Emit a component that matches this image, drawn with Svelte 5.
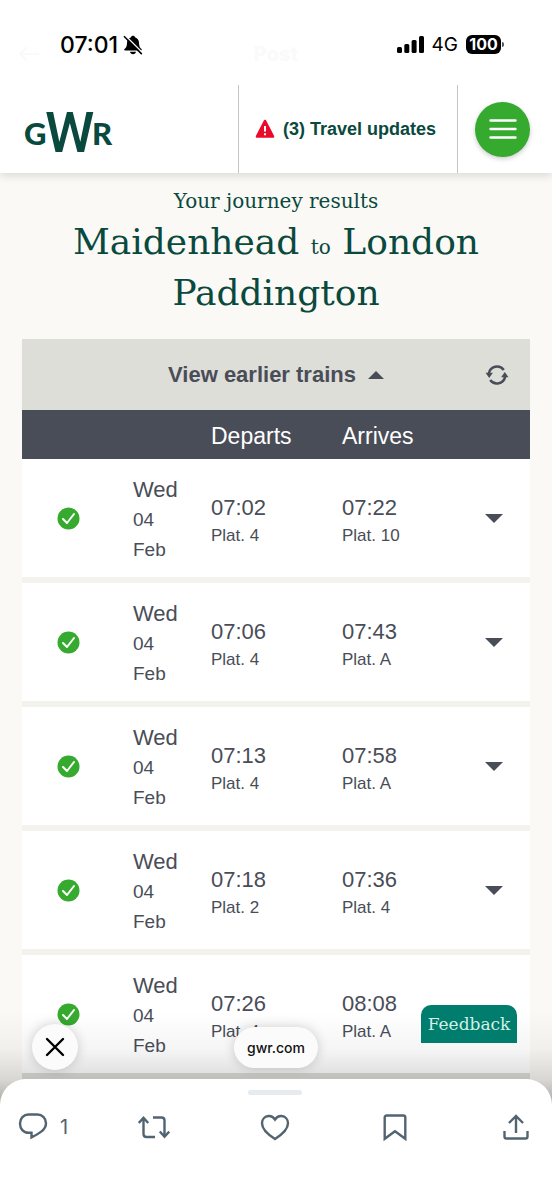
<script lang="ts">
    interface Train {
        departs: string
        departsPlat: string
        arrives: string
        arrivesPlat: string
    }

    const trains: Train[] = [
        { departs: '07:02', departsPlat: '4', arrives: '07:22', arrivesPlat: '10' },
        { departs: '07:06', departsPlat: '4', arrives: '07:43', arrivesPlat: 'A' },
        { departs: '07:13', departsPlat: '4', arrives: '07:58', arrivesPlat: 'A' },
        { departs: '07:18', departsPlat: '2', arrives: '07:36', arrivesPlat: '4' },
        { departs: '07:26', departsPlat: '4', arrives: '08:08', arrivesPlat: 'A' },
    ]
</script>

<div class="screen">
    <div class="status-bar">
        <div class="under-nav" aria-hidden="true">
            <svg width="22" height="16" viewBox="0 0 22 16"><path d="M21 8H2M9 1 2 8l7 7" /></svg>
            <span>Post</span>
        </div>
        <div class="clock">
            <span>07:01</span>
            <svg width="20" height="20" viewBox="0 0 20 20">
                <path d="M10 .8c1 0 1.800.6 2 1.400 2.700.9 4 3 4 5.800 0 3.300.9 4.500 2.500 6.100.5.500.3 1.500-.6 1.500H2.100c-.9 0-1.100-1-.6-1.500C3.100 12.500 4 11.300 4 8c0-2.800 1.300-4.900 4-5.800C8.200 1.400 9 .8 10 .8zM7 16.700h6c-.2 1.500-1.400 2.500-3 2.500s-2.800-1-3-2.500z" fill="#000" />
                <path d="M2.700 1 20 18.300" stroke="#fff" stroke-width="1.500" />
                <path d="M1 1.300 18.800 19.100" stroke="#000" stroke-width="1.600" />
            </svg>
        </div>
        <div class="signal">
            <svg width="27" height="17" viewBox="0 0 27 17">
                <rect x="0" y="11" width="5" height="6" rx="1.500" />
                <rect x="7.300" y="8" width="5" height="9" rx="1.500" />
                <rect x="14.600" y="4" width="5" height="13" rx="1.500" />
                <rect x="22" y="0" width="5" height="17" rx="1.500" />
            </svg>
            <span class="network">4G</span>
            <span class="battery">100</span>
        </div>
    </div>

    <header>
        <a class="logo" href="/" aria-label="GWR home">
            <svg width="96" height="72" viewBox="0 0 96 72">
                <text class="small-letter" x="0" y="52">G</text>
                <text class="big-letter" x="21" y="59">W</text>
                <text class="small-letter" x="68" y="52">R</text>
            </svg>
        </a>
        <a class="updates" href="/travel-updates">
            <svg width="20" height="20" viewBox="0 0 20 20">
                <path d="M10 2 18 17.500H2z" fill="#ea0a2a" stroke="#ea0a2a" stroke-width="2.600" stroke-linejoin="round" />
                <path d="M10 7v5.500M10 14.200v2" stroke="#fff" stroke-width="2" />
            </svg>
            <span>(3) Travel updates</span>
        </a>
        <div class="menu-cell">
            <button class="menu" aria-label="Menu">
                <svg width="28" height="22" viewBox="0 0 28 22">
                    <path d="M1.500 2.500h25M1.500 11h25M1.500 19.500h25" stroke="#fff" stroke-width="2.400" stroke-linecap="round" />
                </svg>
            </button>
        </div>
    </header>

    <div class="view">
        <main>
            <p class="intro">Your journey results</p>
            <h1>Maidenhead <small>to</small> London Paddington</h1>

            <div class="earlier">
                <button class="earlier-button">
                    View earlier trains
                    <svg width="16" height="8" viewBox="0 0 16 8"><path d="M0 8 8 0l8 8z" /></svg>
                </button>
                <button class="refresh" aria-label="Refresh">
                    <svg width="24" height="22" viewBox="0 0 24 22">
                        <path d="M3.800 9.500A8.400 8.400 0 0 1 18.800 6M20.200 12.500A8.400 8.400 0 0 1 5.200 16" fill="none" stroke="#494d57" stroke-width="2.500" />
                        <path d="M.5 8.800h7.400L4.200 14zM16.100 13.200h7.400L19.800 8z" />
                    </svg>
                </button>
            </div>

            <table>
                <colgroup>
                    <col class="col-status">
                    <col class="col-date">
                    <col class="col-departs">
                    <col>
                    <col class="col-expand">
                </colgroup>
                <thead>
                    <tr>
                        <th></th>
                        <th></th>
                        <th>Departs</th>
                        <th>Arrives</th>
                        <th></th>
                    </tr>
                </thead>
                <tbody>
                    {#each trains as train}
                        <tr>
                            <td class="status">
                                <svg width="23" height="23" viewBox="0 0 23 23" role="img" aria-label="On time">
                                    <circle cx="11.500" cy="11.500" r="11" fill="#36aa2e" />
                                    <path d="M6 12l4 4 7-9" fill="none" stroke="#fff" stroke-width="2" stroke-linecap="round" stroke-linejoin="round" />
                                </svg>
                            </td>
                            <td class="date">
                                <div class="day">Wed</div>
                                <div>04</div>
                                <div>Feb</div>
                            </td>
                            <td class="stop">
                                <div class="time">{train.departs}</div>
                                <div class="plat">Plat. {train.departsPlat}</div>
                            </td>
                            <td class="stop">
                                <div class="time">{train.arrives}</div>
                                <div class="plat">Plat. {train.arrivesPlat}</div>
                            </td>
                            <td class="expand">
                                <button aria-label="Show details">
                                    <svg width="18" height="9" viewBox="0 0 18 9"><path d="M0 0h18L9 9z" /></svg>
                                </button>
                            </td>
                        </tr>
                    {/each}
                </tbody>
            </table>
            <div class="later"></div>
        </main>

        <div class="fade"></div>
        <button class="feedback">Feedback</button>
        <button class="close" aria-label="Close">
            <svg width="20" height="20" viewBox="0 0 20 20">
                <path d="M2 2l16 16M18 2 2 18" stroke="#000" stroke-width="2.400" stroke-linecap="round" />
            </svg>
        </button>
        <a class="domain" href="https://www.gwr.com">gwr.com</a>
    </div>

    <footer>
        <div class="handle"></div>
        <div class="actions">
            <button aria-label="Reply, 1 reply">
                <svg width="32" height="32" viewBox="0 0 32 32">
                    <path d="M11.500 3.500h9a8.500 8.500 0 0 1 8.500 8.700c0 3.800-1.800 6.200-4.800 8.400-3 2.300-6 4-9.700 5.800v-4.600h-3C6.400 21.800 3 17.700 3 12.400A8.700 8.700 0 0 1 11.500 3.500z" />
                </svg>
                <span>1</span>
            </button>
            <button aria-label="Repost">
                <svg width="32" height="32" viewBox="0 0 32 32">
                    <path d="M.8 12 5.500 6.800 10.200 12M5.500 7.500V23q0 3 3 3H17M15 6.500h8.500q3 0 3 3V25M21.800 20.500l4.700 5.200 4.700-5.200" />
                </svg>
            </button>
            <button aria-label="Like">
                <svg width="32" height="32" viewBox="0 0 32 32">
                    <path d="M16 8.500C14 5.500 11.500 4.800 9.500 5 5.800 5.300 3 8.300 3 12.300 3 18 8 23 16 28c8-5 13-10 13-15.700 0-4-2.800-7-6.500-7.300-2-.2-4.500.5-6.500 3.500z" />
                </svg>
            </button>
            <button aria-label="Bookmark">
                <svg width="32" height="32" viewBox="0 0 32 32">
                    <path d="M5.700 6.500q0-2 2-2h16.600q2 0 2 2v21.300L16 20.300 5.700 27.800z" />
                </svg>
            </button>
            <button aria-label="Share">
                <svg width="32" height="32" viewBox="0 0 32 32">
                    <path d="M16 22V5.500M9 12l7-7 7 7M4.500 20v5.500q0 2 2 2h19q2 0 2-2V20" />
                </svg>
            </button>
        </div>
    </footer>
</div>

<style>
    :global(body) {
        margin: 0;
        background-color: #faf9f5;
    }

    .screen {
        height: 100vh;
        display: flex;
        flex-direction: column;
        overflow: hidden;
        font-family: "Liberation Sans", Arial, sans-serif;
        color: #494d57;
    }

    button {
        margin: 0;
        padding: 0;
        border: none;
        background: none;
        font: inherit;
        color: inherit;
        cursor: pointer;
    }

    a {
        color: inherit;
        text-decoration: none;
    }

    svg {
        display: block;
        flex: none;
    }

    .status-bar {
        position: relative;
        z-index: 2;
        flex: none;
        box-sizing: border-box;
        height: 85px;
        padding: 4px 51px 0 60px;
        display: flex;
        align-items: center;
        justify-content: space-between;
        background-color: white;
        font-family: Inter, sans-serif;
        color: black;
    }

    /* the post's own title bar, almost hidden behind the status bar */
    .under-nav {
        position: absolute;
        top: 42px;
        left: 18px;
        right: 18px;
        display: grid;
        grid-template-columns: 22px 1fr 22px;
        align-items: center;
        text-align: center;
        font-size: 20px;
        font-weight: 800;
        color: #fafafa;
    }

    .under-nav path {
        fill: none;
        stroke: #fafafa;
        stroke-width: 2;
    }

    .clock {
        display: flex;
        align-items: center;
        gap: 5px;
        font-size: 23px;
        font-weight: 500;
    }

    .signal {
        display: flex;
        align-items: center;
        gap: 8px;
    }

    .network {
        font-size: 19px;
    }

    .battery {
        position: relative;
        width: 35px;
        border-radius: 6px;
        background-color: black;
        color: white;
        font-size: 16px;
        font-weight: 700;
        line-height: 19px;
        text-align: center;
    }

    .battery::after {
        content: "";
        position: absolute;
        top: 7px;
        right: -3px;
        width: 2px;
        height: 5px;
        border-radius: 0 2px 2px 0;
        background-color: #555;
    }

    header {
        position: relative;
        z-index: 1;
        flex: none;
        height: 88px;
        display: flex;
        background-color: white;
        box-shadow: 0 3px 8px rgba(0, 0, 0, 0.12);
    }

    .logo {
        flex: 1;
        display: flex;
        align-items: center;
        padding-left: 24px;
    }

    .logo text {
        fill: #0a493e;
    }

    .small-letter {
        font: 900 31px Lato, sans-serif;
    }

    .big-letter {
        font: 500 56px Roboto, sans-serif;
    }

    .updates {
        box-sizing: border-box;
        width: 219px;
        display: flex;
        align-items: center;
        gap: 8px;
        padding-left: 16px;
        border-left: 1px solid #c4c4c4;
        font-size: 18px;
        font-weight: bold;
        color: #0a493e;
        white-space: nowrap;
    }

    .menu-cell {
        box-sizing: border-box;
        width: 95px;
        display: flex;
        align-items: center;
        padding-left: 17px;
        border-left: 1px solid #c4c4c4;
    }

    .menu {
        width: 55px;
        height: 55px;
        display: flex;
        align-items: center;
        justify-content: center;
        border-radius: 50%;
        background-color: #36aa2e;
        box-shadow: 0 2px 5px rgba(0, 0, 0, 0.2);
    }

    .view {
        position: relative;
        flex: 1;
        min-height: 0;
    }

    main {
        box-sizing: border-box;
        height: 100%;
        padding: 14px 22px 0;
        overflow-y: auto;
        scrollbar-width: none;
    }

    .intro {
        margin: 0;
        font-family: "DejaVu Serif", serif;
        font-size: 20px;
        line-height: 28px;
        text-align: center;
        color: #0a493e;
    }

    h1 {
        margin: 1px 0 21px;
        font-family: "DejaVu Serif", serif;
        font-size: 36px;
        font-weight: normal;
        line-height: 51px;
        text-align: center;
        color: #0a493e;
    }

    h1 small {
        font-size: 20px;
        line-height: 24px;
    }

    .earlier {
        height: 71px;
        display: grid;
        grid-template-columns: 66px 1fr 66px;
        align-items: center;
        background-color: #deded9;
    }

    .earlier-button {
        grid-column: 2;
        display: flex;
        align-items: center;
        justify-content: center;
        gap: 12px;
        font-size: 22px;
        font-weight: bold;
    }

    .refresh {
        justify-self: center;
    }

    .earlier svg,
    .expand svg {
        fill: #494d57;
    }

    table {
        width: 100%;
        table-layout: fixed;
        border-collapse: separate;
        border-spacing: 0;
    }

    .col-status {
        width: 111px;
    }

    .col-date {
        width: 78px;
    }

    .col-departs {
        width: 131px;
    }

    .col-expand {
        width: 72px;
    }

    th {
        box-sizing: border-box;
        height: 49px;
        padding: 3px 0 0;
        background-color: #494d57;
        color: white;
        font-size: 23px;
        font-weight: normal;
        text-align: left;
    }

    td {
        box-sizing: border-box;
        height: 124px;
        padding: 0;
        border-bottom: 6px solid #f4f2ec;
        background-color: white;
        vertical-align: middle;
    }

    tr:last-child td {
        height: 118px;
        border-bottom: none;
    }

    .status {
        padding-left: 35px;
    }

    .date {
        padding-top: 4px;
        font-size: 19px;
        line-height: 30px;
    }

    .stop {
        padding-top: 5px;
    }

    .day,
    .time {
        font-size: 22px;
    }

    .time {
        line-height: 30px;
    }

    .plat {
        font-size: 17px;
        line-height: 26px;
    }

    .expand button {
        margin: 0 auto;
        display: block;
    }

    .later {
        height: 71px;
        background-color: #deded9;
    }

    .feedback {
        position: absolute;
        right: 35px;
        bottom: 36px;
        width: 96px;
        height: 38px;
        border-radius: 10px 10px 0 0;
        background-color: #007d6c;
        color: #d5f0e8;
        font-family: "DejaVu Serif", serif;
        font-size: 17px;
    }

    .fade {
        position: absolute;
        left: 0;
        right: 0;
        bottom: -28px;
        height: 96px;
        background: linear-gradient(rgba(0, 0, 0, 0), rgba(0, 0, 0, 0.04) 40%, rgba(0, 0, 0, 0.14) 72%, rgba(0, 0, 0, 0.35));
        pointer-events: none;
    }

    .close {
        position: absolute;
        left: 32px;
        bottom: 9px;
        width: 46px;
        height: 46px;
        display: flex;
        align-items: center;
        justify-content: center;
        border-radius: 50%;
        background-color: #fbfbfb;
        box-shadow: 0 0 12px rgba(0, 0, 0, 0.18);
    }

    .domain {
        position: absolute;
        left: 50%;
        bottom: 11px;
        padding: 0 13px;
        border-radius: 21px;
        background-color: #fbfbfb;
        box-shadow: 0 0 12px rgba(0, 0, 0, 0.18);
        color: #111;
        font-family: Inter, sans-serif;
        font-size: 14px;
        font-weight: 500;
        line-height: 41px;
        transform: translateX(-50%);
    }

    footer {
        position: relative;
        flex: none;
        box-sizing: border-box;
        height: 121px;
        padding: 11px 20px 0 17px;
        border-radius: 26px 26px 0 0;
        background-color: white;
    }

    /* carries the page and its shadow on behind the rounded corners */
    footer::before {
        content: "";
        position: absolute;
        inset: 0 0 auto;
        z-index: -1;
        height: 28px;
        background-color: #faf9f5;
    }

    .handle {
        width: 54px;
        height: 5px;
        margin: 0 auto 16px;
        border-radius: 3px;
        background-color: #e6ebef;
    }

    .actions {
        display: flex;
        justify-content: space-between;
    }

    .actions button {
        width: 32px;
        display: flex;
        align-items: center;
        gap: 11px;
        font-family: Inter, sans-serif;
        font-size: 20px;
        color: #536471;
    }

    .actions path {
        fill: none;
        stroke: #536471;
        stroke-width: 2.4;
    }
</style>
